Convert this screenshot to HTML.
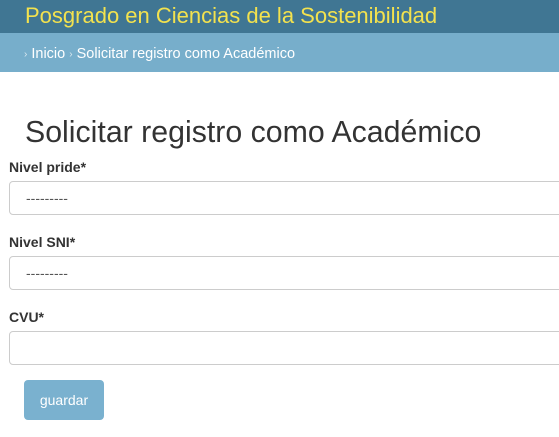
<html><head><style>
body{margin:0;width:559px;height:437px;overflow:hidden;background:#fff;font-family:"Liberation Sans",sans-serif;position:relative}
.top{position:absolute;left:0;top:0;width:559px;height:33px;background:#407693}
.top span{position:absolute;left:25px;top:3px;font-size:22px;color:#f3e24e}
.bc{position:absolute;left:0;top:33px;width:559px;height:39px;background:#77aecb;color:#fff;font-size:14.5px}
.bc span{position:absolute;left:24px;top:13px}
.bc i{font-style:normal;font-size:10px;color:#dbe9f0;vertical-align:1px}
h1{position:absolute;left:25px;top:116px;margin:0;font-weight:normal;font-size:30.3px;color:#333}
label{position:absolute;left:9px;font-weight:bold;font-size:14px;color:#333}
.in{position:absolute;left:9px;width:570px;height:32px;border:1px solid #ccc;border-radius:4px;box-sizing:border-box;font-size:14px;color:#555;padding:8px 16px}
.btn{position:absolute;left:24px;top:380px;width:80px;height:40px;background:#7ab1cf;border-radius:4px;color:#fff;font-size:14px;text-align:center;line-height:40px}
</style></head><body>
<div class="top"><span>Posgrado en Ciencias de la Sostenibilidad</span></div>
<div class="bc"><span><i>›</i> Inicio <i>›</i> Solicitar registro como Académico</span></div>
<h1>Solicitar registro como Académico</h1>
<label style="top:159px">Nivel pride*</label>
<div class="in" style="top:181px;height:34px">---------</div>
<label style="top:234px">Nivel SNI*</label>
<div class="in" style="top:256px;height:34px">---------</div>
<label style="top:309px">CVU*</label>
<div class="in" style="top:331px;height:34px"></div>
<div class="btn">guardar</div>
</body></html>
